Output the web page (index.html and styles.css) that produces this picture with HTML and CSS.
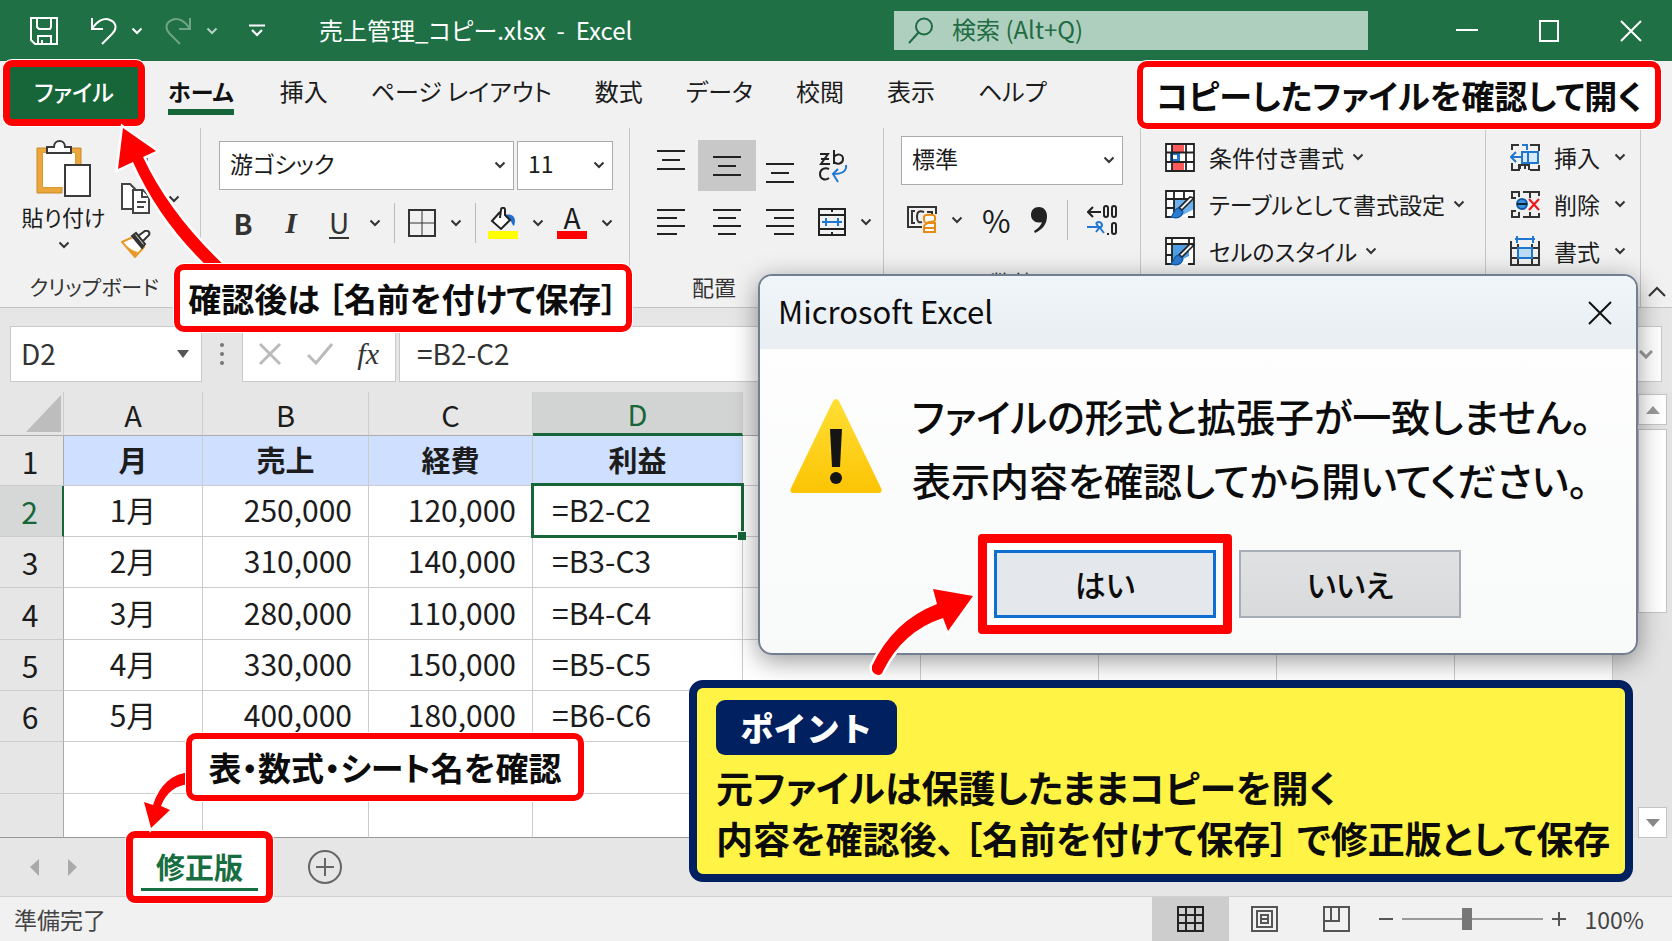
FILE: index.html
```html
<!DOCTYPE html>
<html lang="ja">
<head>
<meta charset="utf-8">
<title>売上管理_コピー.xlsx - Excel</title>
<link rel="stylesheet" href="styles.css">
</head>
<body>
<svg class="defs" aria-hidden="true">
  <symbol id="chev" viewBox="0 0 12 8"><path d="M1.5 1.5 6 6l4.500-4.500" fill="none" stroke="currentColor" stroke-width="2"/></symbol>
  <symbol id="brush" viewBox="0 0 30 30"><path d="M29 9 17 21l-3-2L25 8z" fill="#eef3f8" stroke="#222" stroke-width="1.600"/><path d="M13 19l5 4c-1 5-6 7-12 5 3-2 2-7 7-9z" fill="#2b7cd3" stroke="#1259a5" stroke-width="1.200"/></symbol>
</svg>
<div class="app">
  <header class="titlebar">
    <div class="quick">
      <button class="ic save" aria-label="上書き保存"><svg width="28" height="28" viewBox="0 0 28 28" fill="none" stroke="#fff" stroke-width="2"><path d="M1 1h26v26H5l-4-4zM7 1v9l2 2h11l1-2V1M8 27v-8h13v8M12 27v-4"/></svg></button>
      <button class="ic undo" aria-label="元に戻す"><svg width="28" height="28" viewBox="0 0 28 28" fill="none" stroke="#fff" stroke-width="2"><path d="M2 1v11h11M2 12C7 4 14 0 20 3c7 3 7 9 2 14L12 27"/></svg></button>
      <button class="ic" aria-label="元に戻すの一覧"><svg class="chev white" ><use href="#chev"/></svg></button>
      <button class="ic redo" aria-label="やり直し"><svg width="28" height="28" viewBox="0 0 28 28" fill="none" stroke="#6fa487" stroke-width="2"><path d="M26 1v11H15M26 12C21 4 14 0 8 3c-7 3-7 9-2 14l10 10"/></svg></button>
      <button class="ic" aria-label="やり直しの一覧"><svg class="chev pale"><use href="#chev"/></svg></button>
      <button class="ic custom" aria-label="クイック アクセス ツール バーのカスタマイズ"><svg width="16" height="14" viewBox="0 0 16 14" fill="none" stroke="#fff" stroke-width="2.200"><path d="M0 1.500h16M3 6l5 5 5-5"/></svg></button>
    </div>
    <h1 class="title">売上管理_コピー.xlsx&nbsp; -&nbsp; Excel</h1>
    <label class="search">
      <svg width="26" height="28" viewBox="0 0 26 28" fill="none" stroke="#1c6b42" stroke-width="2"><circle cx="16" cy="9.500" r="8"/><path d="M10.500 15.500 1 26"/></svg>
      <input type="text" placeholder="検索 (Alt+Q)" aria-label="検索">
    </label>
    <div class="winbtns">
      <button class="ic" aria-label="最小化"><svg width="22" height="22" stroke="#fff" stroke-width="2"><path d="M0 10h22"/></svg></button>
      <button class="ic" aria-label="最大化"><svg width="22" height="22" fill="none" stroke="#fff" stroke-width="2"><path d="M2 1h18v20H2z"/></svg></button>
      <button class="ic" aria-label="閉じる"><svg width="22" height="22" stroke="#fff" stroke-width="2"><path d="M1 1l20 20M21 1 1 21"/></svg></button>
    </div>
  </header>

  <nav class="tabs">
    <button class="tab file">ファイル</button>
    <button class="tab home">ホーム</button>
    <button class="tab">挿入</button>
    <button class="tab">ページ レイアウト</button>
    <button class="tab">数式</button>
    <button class="tab">データ</button>
    <button class="tab">校閲</button>
    <button class="tab">表示</button>
    <button class="tab">ヘルプ</button>
  </nav>

  <section class="ribbon">
    <div class="group clip">
      <div class="cliprow">
        <button class="paste">
          <svg width="56" height="58" viewBox="0 0 56 58"><path d="M1 8h44v17h-6V13H7v34h19v6H1z" fill="#eba63c" stroke="#c98a2b"/><path d="M7 13h32v12H29v22H7z" fill="#fff"/><path d="M11 13V7h7c0-8 11-8 11 0h6v6z" fill="#fff" stroke="#3a3a3a" stroke-width="2"/><path d="M29 25h25v31H29z" fill="#fff" stroke="#3a3a3a" stroke-width="2"/></svg>
          <span>貼り付け</span>
          <svg class="chev"><use href="#chev"/></svg>
        </button>
        <div class="clipside">
          <button class="ic" aria-label="切り取り"><svg width="30" height="28" viewBox="0 0 30 28" fill="none" stroke="#2b6cb8" stroke-width="2"><path d="M24 1 14 17" stroke="#333"/><circle cx="22" cy="20" r="4"/></svg></button>
          <span class="copy"><button class="ic" aria-label="コピー"><svg width="30" height="32" viewBox="0 0 30 32" fill="#fff" stroke="#444" stroke-width="2"><path d="M1 26V1h8l5 5v20z"/><path d="M12 30V7h10l6 6v17z"/><path d="M21 8v6h6M16 19h9M16 24h7" fill="none"/></svg></button><svg class="chev"><use href="#chev"/></svg></span>
          <button class="ic" aria-label="書式のコピー"><svg width="30" height="28" viewBox="0 0 30 28"><path d="M12 7 1 12l13 15 9-10z" fill="#fff" stroke="#e59a2b" stroke-width="2"/><path d="M3 14l11 12 3-4c-5-1-9-4-14-8z" fill="#e59a2b"/><path d="M11 6l4-3 9 11-3 4zM17 6l7-5c4-1 5 2 4 4l-6 6M13 5l9 11" fill="#fff" stroke="#333" stroke-width="2"/></svg></button>
        </div>
      </div>
      <p class="glabel">クリップボード</p>
    </div>

    <div class="group font">
      <div class="selects">
        <span class="sel wide"><select aria-label="フォント"><option>游ゴシック</option></select><svg class="chev"><use href="#chev"/></svg></span>
        <span class="sel size"><select aria-label="フォント サイズ"><option>11</option></select><svg class="chev"><use href="#chev"/></svg></span>
      </div>
      <div class="fontrow">
        <span class="biu">
          <button class="ic glyph b">B</button>
          <button class="ic glyph i">I</button>
          <button class="ic glyph u"><span>U</span></button>
          <svg class="chev"><use href="#chev"/></svg>
        </span>
        <i class="vsep"></i>
        <span class="pair"><button class="ic" aria-label="罫線"><svg width="28" height="28" fill="none" stroke="#333" stroke-width="2"><path d="M1 1h26v26H1z"/><path d="M14 1v26M1 14h26" stroke-width="1"/></svg></button><svg class="chev"><use href="#chev"/></svg></span>
        <i class="vsep"></i>
        <span class="pair"><button class="ic" aria-label="塗りつぶしの色"><svg width="30" height="32" viewBox="0 0 30 32"><path d="M0 24h30v8H0z" fill="#ff0"/><path d="M17 8c8-2 12 3 9 11-2-1-2-4-4-6z" fill="#1f6fd0"/><path d="M12 5 4 14l9 8 9-9-5-5V3c0-3-4-3-4 0l-1 8" fill="#fff" stroke="#222" stroke-width="2"/></svg></button><svg class="chev"><use href="#chev"/></svg></span>
        <span class="pair"><button class="ic fcolor" aria-label="フォントの色">A</button><svg class="chev"><use href="#chev"/></svg></span>
      </div>
    </div>

    <div class="group align">
      <div class="aligngrid">
        <button class="ic up" aria-label="上揃え"><svg width="28" height="20" stroke="#222" stroke-width="2"><path d="M0 1h28M5 10h18M0 19h28"/></svg></button>
        <button class="ic on" aria-label="上下中央揃え"><svg width="28" height="20" stroke="#222" stroke-width="2"><path d="M0 1h28M5 10h18M0 19h28"/></svg></button>
        <button class="ic down" aria-label="下揃え"><svg width="28" height="20" stroke="#222" stroke-width="2"><path d="M0 1h28M5 10h18M0 19h28"/></svg></button>
        <button class="ic" aria-label="折り返して全体を表示する"><svg width="30" height="34" viewBox="0 0 30 34" fill="none" stroke="#222" stroke-width="2"><path d="M2 5h8L3 15h9M3 10h8M16 1v14M16 8c3-4 9-3 9 2s-6 6-9 3M11 20c-4-2-9 0-9 5s5 7 9 4"/><path d="M28 16c1 6-4 9-12 9M20 20l-5 5 5 8" stroke="#1f77d0"/></svg></button>
        <button class="ic" aria-label="左揃え"><svg width="28" height="26" stroke="#222" stroke-width="2"><path d="M0 1h28M0 9h20M0 17h28M0 25h20"/></svg></button>
        <button class="ic" aria-label="中央揃え"><svg width="28" height="26" stroke="#222" stroke-width="2"><path d="M0 1h28M5 9h18M0 17h28M5 25h18"/></svg></button>
        <button class="ic" aria-label="右揃え"><svg width="28" height="26" stroke="#222" stroke-width="2"><path d="M0 1h28M8 9h20M0 17h28M8 25h20"/></svg></button>
        <span class="pair"><button class="ic" aria-label="セルを結合して中央揃え"><svg width="28" height="28" fill="none" stroke="#222" stroke-width="2"><path d="M1 1h26v26H1zM1 7h26M1 21h26M14 1v3M14 24v3"/><path d="M4 14h20M8 10v8M20 10v8" stroke="#1f77d0"/></svg></button><svg class="chev"><use href="#chev"/></svg></span>
      </div>
      <p class="glabel">配置</p>
    </div>

    <div class="group num">
      <span class="sel"><select aria-label="表示形式"><option>標準</option></select><svg class="chev"><use href="#chev"/></svg></span>
      <div class="numrow">
        <span class="pair"><button class="ic" aria-label="通貨表示形式"><svg width="30" height="28" viewBox="0 0 30 28" fill="none" stroke="#333" stroke-width="2"><path d="M15 21H1V1h28v7"/><path d="M8 5H5v12h3M17 6c-5-2-7 0-7 5s2 6 5 5M20 6h5v3"/><path d="M17 11c0-3 11-3 11 0v3c0 2-8 2-8 3h8v9H17v-5c0-3 3-3 3-4-3 0-3-2-3-6z" fill="#fff" stroke="#e98a15"/><path d="M18 22h9" stroke="#e98a15"/></svg></button><svg class="chev"><use href="#chev"/></svg></span>
        <button class="ic pct">%</button>
        <button class="ic" aria-label="桁区切り"><svg width="18" height="28" viewBox="0 0 18 28"><path d="M9 1c5 0 8 4 8 9 0 8-4 13-12 17l-1-2c5-3 7-6 8-9-6 2-11-2-11-7 0-5 3-8 8-8z" fill="#222"/></svg></button>
        <i class="vsep"></i>
        <button class="ic" aria-label="小数点以下の表示桁数"><svg width="30" height="32" viewBox="0 0 30 32" fill="none" stroke="#222" stroke-width="2"><path d="M1 8h13M6 3 1 8l5 5"/><rect x="17" y="2" width="4" height="11" rx="2"/><rect x="25" y="2" width="4" height="11" rx="2"/><rect x="25" y="19" width="4" height="11" rx="2"/><path d="M21 29v2"/><path d="M0 23h13M9 19c5-3 8 2 4 5l4 5M9 19l3 5-3 4" stroke="#1f77d0"/></svg></button>
      </div>
      <p class="glabel">数値</p>
    </div>

    <div class="group list styles">
      <button class="item"><svg width="30" height="29" viewBox="0 0 30 29"><path d="M1 1h28v27H1z" fill="#fff"/><path d="M7 2h12v7H7zM7 20h12v7H7z" fill="#ff5a5a"/><path d="M5 10h10v8H5z" fill="#1f77d0"/><path d="M8 12h4v4H8z" fill="#fff"/><path d="M1 1h28v27H1zM1 9.500h28M1 19h28M7 1v27M21 1v27" fill="none" stroke="#222" stroke-width="1.800"/></svg><span>条件付き書式</span><svg class="chev"><use href="#chev"/></svg></button>
      <button class="item"><svg width="30" height="30" viewBox="0 0 30 30"><path d="M1 2h28v26H1z" fill="#fff"/><path d="M9 10h20v10L14 28 9 22z" fill="#6cb2ee"/><path d="M14 28H1V2h28v26h-6M1 10h28M1 19h8M9 2v26M19 2v8" fill="none" stroke="#222" stroke-width="1.800"/><use href="#brush"/></svg><span>テーブルとして書式設定</span><svg class="chev"><use href="#chev"/></svg></button>
      <button class="item"><svg width="30" height="30" viewBox="0 0 30 30"><path d="M1 2h28v26H1z" fill="#fff"/><path d="M7 8h17v12L12 26 7 22z" fill="#4f9fe4"/><path d="M14 28H1V2h28v26h-6M1 8h28M7 2v26M1 19h6M24 2v6" fill="none" stroke="#222" stroke-width="1.800"/><use href="#brush"/></svg><span>セルのスタイル</span><svg class="chev"><use href="#chev"/></svg></button>
    </div>

    <div class="group list cells">
      <button class="item"><svg width="30" height="29" viewBox="0 0 30 29" fill="none" stroke="#333" stroke-width="2"><path d="M2 7V2h7M20 2h9v6M2 20v7h7V21M20 27h9v-5M10 26v-4h9v5M15 22v4"/><path d="M12 9h16v11H12zM18 9v11" fill="#d6eafb" stroke="#1f77d0"/><path d="M12 14H2M6 9l-5 5 5 5M12 2h5v5" stroke="#1f77d0"/></svg><span>挿入</span><svg class="chev"><use href="#chev"/></svg></button>
      <button class="item"><svg width="30" height="29" viewBox="0 0 30 29" fill="none" stroke="#333" stroke-width="2"><path d="M6 8H2V2h7v5M13 2h16v4M20 2v6M6 21H2v6h7v-5M13 27h16v-4M20 27v-5"/><circle cx="12" cy="14" r="5" fill="#3f94e0" stroke="#1259a5"/><path d="M7 14h10" stroke="#123"/><path d="M19 9l10 11M29 9 19 20" stroke="#f01414"/></svg><span>削除</span><svg class="chev"><use href="#chev"/></svg></button>
      <button class="item"><svg width="30" height="30" viewBox="0 0 30 30" fill="none" stroke="#333" stroke-width="2"><path d="M1 5v24h28V5M1 12h28M1 22h28M8 8v21M22 8v21"/><path d="M8 12h14v10H8z" fill="#bcdcf7" stroke="#1f77d0"/><path d="M5 3h20M7 0v7M23 0v7" stroke="#1f77d0"/></svg><span>書式</span><svg class="chev"><use href="#chev"/></svg></button>
    </div>
    <div class="group tail">
      <button class="ic" aria-label="リボンを折りたたむ"><svg width="18" height="11" fill="none" stroke="#333" stroke-width="2"><path d="M1 10l8-8 8 8"/></svg></button>
    </div>
  </section>

  <section class="fbar">
    <label class="namebox"><input type="text" value="D2" aria-label="名前ボックス"><svg width="12" height="8"><path d="M0 0h12L6 8z" fill="#555"/></svg></label>
    <svg class="dots" width="4" height="22" fill="#777"><circle cx="2" cy="2" r="2"/><circle cx="2" cy="11" r="2"/><circle cx="2" cy="20" r="2"/></svg>
    <div class="fx">
      <button class="ic" aria-label="キャンセル"><svg width="24" height="24" stroke="#bbb" stroke-width="3"><path d="M2 2l20 20M22 2 2 22"/></svg></button>
      <button class="ic" aria-label="入力"><svg width="26" height="22" fill="none" stroke="#bbb" stroke-width="3"><path d="M1 12l8 8L25 1"/></svg></button>
      <button class="ic fxb">fx</button>
    </div>
    <label class="formula"><input type="text" value="=B2-C2" aria-label="数式バー"><svg width="14" height="9" fill="none" stroke="#999" stroke-width="3"><path d="M1 1l6 6 6-6"/></svg></label>
  </section>

  <main class="sheet">
    <table>
      <colgroup><col class="c0"><col class="c1"><col class="c2"><col class="c3"><col class="c4"><col class="cx"><col class="cx"><col class="cx"><col class="cx"><col></colgroup>
      <thead><tr><th class="corner"><svg width="35" height="37"><path d="M35 0v37H0z" fill="#bdbdbd"/></svg></th><th>A</th><th>B</th><th>C</th><th class="cur">D</th><th></th><th></th><th></th><th></th><th></th></tr></thead>
      <tbody>
        <tr class="head"><th>1</th><td>月</td><td>売上</td><td>経費</td><td>利益</td><td></td><td></td><td></td><td></td><td></td></tr>
        <tr class="active"><th>2</th><td>1月</td><td>250,000</td><td>120,000</td><td class="picked">=B2-C2</td><td></td><td></td><td></td><td></td><td></td></tr>
        <tr><th>3</th><td>2月</td><td>310,000</td><td>140,000</td><td>=B3-C3</td><td></td><td></td><td></td><td></td><td></td></tr>
        <tr class="tall"><th>4</th><td>3月</td><td>280,000</td><td>110,000</td><td>=B4-C4</td><td></td><td></td><td></td><td></td><td></td></tr>
        <tr><th>5</th><td>4月</td><td>330,000</td><td>150,000</td><td>=B5-C5</td><td></td><td></td><td></td><td></td><td></td></tr>
        <tr><th>6</th><td>5月</td><td>400,000</td><td>180,000</td><td>=B6-C6</td><td></td><td></td><td></td><td></td><td></td></tr>
        <tr class="tall"><th></th><td></td><td></td><td></td><td></td><td></td><td></td><td></td><td></td><td></td></tr>
        <tr class="last"><th></th><td></td><td></td><td></td><td></td><td></td><td></td><td></td><td></td><td></td></tr>
      </tbody>
    </table>
    <div class="vscroll">
      <button class="sb" aria-label="上へ"><svg width="14" height="8"><path d="M0 8h14L7 0z" fill="#999"/></svg></button>
      <div class="thumb"></div>
      <button class="sb end" aria-label="下へ"><svg width="14" height="8"><path d="M0 0h14L7 8z" fill="#888"/></svg></button>
    </div>
  </main>

  <div class="sheettabs">
    <div class="nav">
      <button class="ic" aria-label="前のシート"><svg width="9" height="17"><path d="M9 0v17L0 8z" fill="#aaa"/></svg></button>
      <button class="ic" aria-label="次のシート"><svg width="9" height="17"><path d="M0 0v17l9-9z" fill="#aaa"/></svg></button>
    </div>
    <button class="stab"><span>修正版</span></button>
    <button class="ic add" aria-label="新しいシート"><svg width="36" height="36" fill="none" stroke="#666" stroke-width="2"><circle cx="18" cy="18" r="16"/><path d="M9 18h18M18 9v18"/></svg></button>
  </div>

  <footer class="status">
    <span class="ready">準備完了</span>
    <div class="views">
      <button class="ic view on" aria-label="標準"><svg width="27" height="26" fill="none" stroke="#222" stroke-width="2"><path d="M1 1h25v24H1zM9 1v24M18 1v24M1 9h25M1 17h25"/></svg></button>
      <button class="ic view" aria-label="ページ レイアウト"><svg width="27" height="26" fill="none" stroke="#555" stroke-width="2"><path d="M1 1h25v24H1zM6 5h15v16H6zM10 9h7v8h-7zM11 13h5"/></svg></button>
      <button class="ic view" aria-label="改ページ プレビュー"><svg width="27" height="26" fill="none" stroke="#555" stroke-width="2"><path d="M1 1h25v24H1zM1 15h15V1M8 1v14"/></svg></button>
    </div>
    <div class="zoom">
      <button class="ic" aria-label="縮小"><svg width="14" height="14" stroke="#555" stroke-width="2"><path d="M0 7h14"/></svg></button>
      <input type="range" min="0" max="100" value="46" aria-label="ズーム">
      <button class="ic" aria-label="拡大"><svg width="14" height="14" stroke="#555" stroke-width="2"><path d="M0 7h14M7 0v14"/></svg></button>
      <span>100%</span>
    </div>
  </footer>

  <div class="dialog" role="dialog" aria-labelledby="dt">
    <div class="dhead"><h2 id="dt">Microsoft Excel</h2><button class="ic" aria-label="閉じる"><svg width="24" height="24" stroke="#111" stroke-width="2"><path d="M1 1l22 22M23 1 1 23"/></svg></button></div>
    <div class="dbody">
      <svg class="warn" width="94" height="96" viewBox="0 0 94 96"><defs><linearGradient id="wg" x2="0" y2="1"><stop offset="0" stop-color="#ffdf35"/><stop offset="1" stop-color="#fcc404"/></linearGradient></defs><path d="M44 3q3-4 6 0l42 87q2 5-3 5H5q-5 0-3-5z" fill="url(#wg)"/><path d="M41 31h12l-2 38h-8z" fill="#151515"/><circle cx="47" cy="80" r="6" fill="#151515"/></svg>
      <div class="msg"><p>ファイルの形式と拡張子が一致しません。</p><p>表示内容を確認してから開いてください。</p></div>
    </div>
    <div class="dbtns"><span class="ring"><button class="btn yes">はい</button></span><button class="btn">いいえ</button></div>
  </div>

  <aside class="point">
    <strong class="badge">ポイント</strong>
    <p>元ファイルは保護したままコピーを開く</p>
    <p>内容を確認後、 ［名前を付けて保存］ で修正版として保存</p>
  </aside>

  <svg class="arrow a1" width="120" height="150" viewBox="0 0 120 150"><path d="M13 8 46 31 33 37Q60 95 117 148H99Q50 102 23 42L8 49z"/></svg>
  <svg class="arrow a2" width="112" height="96" viewBox="0 0 112 96"><path d="M108 15 68 8 72 23Q28 40 7 85 6 93 13 94 17 94 18 90 38 50 78 37L83 50z"/></svg>
  <svg class="arrow a3" width="60" height="66" viewBox="0 0 60 66"><path d="M14 61 7 35 16 38Q26 7 54 5V17Q32 18 24 39L33 43z"/></svg>
  <div class="callout k1">コピーしたファイルを確認して開く</div>
  <div class="callout k2">確認後は ［名前を付けて保存］</div>
  <div class="callout k3">表・数式・シート名を確認</div>
</div>
</body>
</html>
```
FILE: styles.css
```css
* { box-sizing: border-box; font-feature-settings: "palt"; }
body {
  margin: 0;
  font-family: "Noto Sans CJK JP", "Noto Sans", sans-serif;
  font-size: 22px;
  line-height: 32px;
  color: #1c1c1c;
  background: #f1f1f1;
}
h1, h2, p { margin: 0; }
h1, h2 { font-weight: 400; }
button, input, select { font: inherit; color: inherit; }
button { background: none; border: 0; padding: 0; }
svg { display: block; flex: none; }
.defs { position: absolute; width: 0; height: 0; }
.chev { width: 12px; height: 8px; color: #333; }
.chev.white { color: #fff; }
.chev.pale { color: #b5d2c3; }
.ic { display: flex; align-items: center; justify-content: center; flex: none; }
.app { position: relative; display: flex; flex-direction: column; min-height: 100vh; overflow: hidden; }

/* Title bar */
.titlebar { display: flex; align-items: center; height: 61px; background: #1f7145; color: #fff; }
.quick { display: flex; align-items: center; width: 319px; padding-left: 30px; }
.undo { margin: 0 13px 0 32px; }
.redo { margin: 0 14px 0 21px; }
.custom { margin-left: 31px; }
.title { flex: 1; padding-bottom: 2px; font-size: 24px; white-space: nowrap; }
.search { display: flex; align-items: center; gap: 18px; width: 474px; height: 39px; margin-right: 88px; padding-left: 14px; background: #aecfbe; }
.search input { flex: 1; min-width: 0; padding: 0 0 3px; border: 0; background: none; font-size: 24px; }
.search input::placeholder { color: #1f6b43; opacity: 1; }
.winbtns { display: flex; gap: 60px; padding-right: 30px; }

/* Ribbon tabs */
.tabs { display: flex; align-items: center; height: 67px; padding: 2px 0 6px 3px; font-size: 24px; gap: 43px; }
.tab { white-space: nowrap; padding-bottom: 3px; }
.file { width: 142px; height: 66px; margin-right: -20px; border: 7px solid #fe0000; border-radius: 9px; background: #176639; color: #fff; font-weight: 500; box-shadow: 0 0 0 1px #fff; font-size: 23px; z-index: 1; }
.home { margin-right: 3px; padding: 4px 0 2px; border-bottom: 6px solid #176639; color: #111; font-size: 23px; font-weight: 700; }

/* Ribbon groups */
.ribbon { display: grid; grid-template-columns: 201fr 429fr 254fr 257fr 345fr 155fr 31px; height: 180px; border-bottom: 1px solid #c4c4c4; }
.group { position: relative; display: flex; flex-direction: column; min-width: 0; border-right: 1px solid #c6c6c6; }
.tail { border: 0; align-items: center; justify-content: flex-end; padding-bottom: 10px; }
.glabel { margin-top: auto; text-align: center; font-size: 22px; color: #333; white-space: nowrap; }
.clip, .align { padding-bottom: 5px; }
.clip .glabel { font-size: 21px; padding-right: 12px; }
.cliprow { display: flex; height: 130px; padding: 12px 0 0 20px; gap: 14px; }
.paste { display: flex; flex-direction: column; align-items: center; width: 87px; font-size: 22px; white-space: nowrap; }
.paste span { padding: 2px 0 9px; }
.clipside { display: flex; flex-direction: column; gap: 15px; }
.clipside > * { align-self: flex-start; }
.copy { display: flex; align-items: center; gap: 17px; }

.sel { position: relative; display: flex; }
.sel select { appearance: none; width: 100%; height: 49px; padding: 0 10px 5px; border: 1px solid #ababab; border-radius: 0; background: #fff; font-size: 23px; }
.sel .chev { position: absolute; right: 8px; top: 20px; pointer-events: none; }
.font { padding: 13px 16px 0 18px; }
.selects { display: flex; gap: 3px; }
.wide { flex: 1; }
.size { width: 96px; }
.pair { display: flex; align-items: center; gap: 14px; }
.fontrow { display: flex; align-items: center; gap: 13px; height: 66px; }
.biu { display: flex; align-items: center; }
.biu .chev { margin-left: 6px; }
.glyph { width: 48px; font-size: 28px; color: #333; }
.b { font-weight: 700; }
.i { font-family: "Liberation Serif", serif; font-style: italic; font-weight: 700; font-size: 30px; }
.u span { border-bottom: 2px solid #333; line-height: 30px; }
.vsep { width: 1px; height: 40px; background: #bbb; }
.fcolor { width: 30px; height: 32px; padding-bottom: 4px; border-bottom: 8px solid #f00; font-size: 28px; line-height: 20px; }

.aligngrid { display: grid; grid-template-columns: 54px 58px 48px 72px; grid-template-rows: 51px 61px; align-items: center; padding: 12px 0 0 14px; }
.aligngrid .ic { justify-self: center; }
.aligngrid .on { width: 58px; height: 51px; background: #c8c8c8; }
.up { padding-bottom: 12px; }
.down { padding-top: 14px; }
.aligngrid > :nth-child(4n) { justify-self: start; margin-left: 14px; }
.align .glabel { padding-left: 62px; text-align: left; }

.num { padding: 8px 17px 10px; }
.numrow { display: flex; align-items: center; justify-content: space-between; height: 70px; padding: 0 6px; }
.pct { font-size: 31px; }

.list { padding: 8px 0 35px 24px; justify-content: space-between; }
.item { display: flex; align-items: center; gap: 14px; height: 42px; font-size: 23px; white-space: nowrap; }
.item .chev { margin-left: -6px; }
.cells .item .chev { margin-left: 0; }

/* Formula bar */
.fbar { display: flex; align-items: center; height: 84px; padding: 8px 10px 0; background: #e6e6e6; }
.namebox, .fx, .formula { display: flex; align-items: center; height: 56px; border: 1px solid #c9c9c9; background: #fff; }
.namebox { width: 192px; padding: 0 12px 0 10px; }
.fbar input { flex: 1; min-width: 0; padding: 0 0 3px; border: 0; background: none; color: #333; font-size: 28px; font-feature-settings: normal; font-kerning: none; }
.dots { margin: 0 18px; }
.fx { width: 154px; margin-right: 3px; justify-content: space-between; padding: 0 16px 0 15px; }
.fxb { font: italic 30px/32px "Liberation Serif", serif; color: #333; }
.formula { flex: 1; padding: 0 8px 0 17px; }

/* Sheet */
.sheet { display: flex; flex: 1; background: #e3e3e3; }
table { flex: 1; border-collapse: separate; border-spacing: 0; table-layout: fixed; font-size: 30px; font-kerning: none; background: #fff; }
th, td { font-feature-settings: normal; }
.c0 { width: 64px; } .c1 { width: 139px; } .c2 { width: 166px; } .c3 { width: 164px; } .c4 { width: 210px; } .cx { width: 178px; }
th, td { padding: 0; border-right: 1px solid #ccc; border-bottom: 1px solid #ccc; font-weight: 400; }
thead th { height: 44px; background: #e6e6e6; border-bottom-color: #ababab; font-size: 29px; line-height: 36px; }
tbody th { background: #e6e6e6; padding-right: 3px; border-right-color: #aaa; }
tr { height: 51px; }
thead tr { height: 44px; }
.head { height: 50px; }
.tall { height: 52px; }
.last { height: 44px; }
.last > * { border-bottom-color: #999; }
.corner svg { margin: 0 2px 0 auto; }
th.cur { background: #d2d4d3; color: #176639; border-bottom: 3px solid #176639; }
td { padding-bottom: 4px; }
td:nth-child(2) { text-align: center; }
td:nth-child(3), td:nth-child(4) { text-align: right; padding-right: 16px; }
td:nth-child(5) { padding-left: 19px; }
.head td { padding: 0 0 3px; text-align: center; font-weight: 700; font-size: 29px; }
.head td:nth-child(-n+5) { background: #cfdfff; }
.active th { background: #d6d8d7; color: #176639; border-right: 2px solid #176639; }
.picked { position: relative; }
.picked::before { content: ""; position: absolute; inset: -3px -2px -2px -2px; border: 3px solid #176639; }
.picked::after { content: ""; position: absolute; right: -4px; bottom: -4px; width: 8px; height: 8px; background: #176639; border: 1px solid #fff; border-width: 1px 0 0 1px; }
.vscroll { display: flex; flex-direction: column; width: 59px; padding: 2px 5px 0 25px; gap: 4px; background: #e3e3e3; }
.sb { display: flex; align-items: center; justify-content: center; height: 31px; border: 1px solid #c4c4c4; background: #fff; }
.thumb { height: 184px; border: 1px solid #c4c4c4; background: #fff; }
.end { margin-top: auto; }

/* Sheet tabs */
.sheettabs { display: flex; align-items: center; height: 58px; background: #e6e6e6; }
.nav { display: flex; gap: 29px; width: 126px; padding-left: 30px; }
.stab { display: flex; align-items: center; justify-content: center; width: 147px; height: 72px; margin-right: 34px; border: 7px solid #fe0000; border-radius: 9px; background: #fff; color: #176e40; font-size: 29px; font-weight: 700; box-shadow: 0 0 0 1px #fff; z-index: 1; }
.stab span { padding: 5px 15px; border-bottom: 3px solid #176e40; line-height: 34px; }

/* Status bar */
.status { display: flex; align-items: center; height: 45px; padding: 0 28px 0 14px; border-top: 1px solid #d0d0d0; color: #444; }
.ready { flex: 1; font-size: 23px; }
.views { display: flex; height: 44px; }
.view { width: 72px; }
.view.on { width: 77px; background: #cdcdcd; }
.zoom { display: flex; align-items: center; gap: 9px; padding-left: 6px; }
.zoom input { appearance: none; width: 141px; height: 22px; margin: 0; background: linear-gradient(#999, #999) center / 100% 2px no-repeat; }
.zoom input::-webkit-slider-thumb { appearance: none; width: 10px; height: 22px; background: #777; }
.zoom span { padding-left: 10px; font-size: 23px; }

/* Dialog */
.dialog { position: absolute; left: 758px; right: 34px; top: 274px; height: 381px; border: 2px solid #737f90; border-radius: 14px; background: linear-gradient(#fff, #f8f9f9); box-shadow: 0 6px 26px rgba(0, 0, 0, .4); overflow: hidden; color: #0c0c0c; }
.dhead { display: flex; align-items: center; justify-content: space-between; height: 73px; padding: 0 24px 0 18px; background: linear-gradient(#f0f5fa, #e9eef3); }
.dhead h2 { padding-bottom: 3px; font-size: 31px; }
.dbody { display: flex; gap: 29px; padding: 34px 0 0 29px; }
.warn { margin-top: 15px; }
.msg { font-size: 39px; line-height: 64px; font-weight: 500; white-space: nowrap; }
.dbtns { display: flex; align-items: center; gap: 7px; padding: 23px 0 0 218px; }
.ring { padding: 7px; border: 9px solid #fe0000; border-radius: 4px; background: #fff; }
.btn { display: block; width: 222px; height: 68px; border: 2px solid #a7adb4; background: linear-gradient(#e0e1e2, #d9dadb); font-size: 31px; font-weight: 500; }
.yes { border: 3px solid #0e6fd0; background: #e4e7eb; }

/* Callouts */
.point { position: absolute; left: 689px; right: 39px; top: 680px; padding: 12px 0 10px 19px; border: 8px solid #002060; border-radius: 14px; background: #fff445; font-size: 37px; line-height: 51px; font-weight: 700; color: #0c0c0c; }
.point p { white-space: nowrap; }
.badge { display: block; width: 181px; height: 55px; margin-bottom: 7px; border-radius: 9px; background: #002060; color: #fff; font-size: 33px; line-height: 54px; text-align: center; font-feature-settings: normal; }
.callout { position: absolute; height: 68px; border: 6px solid #fe0000; border-radius: 10px; background: #fff; color: #0c0c0c; font-size: 33px; font-weight: 700; line-height: 56px; text-align: center; white-space: nowrap; box-shadow: 0 0 0 1px #fff; z-index: 2; }
.k1 { right: 11px; top: 61px; width: 524px; }
.k2 { left: 174px; top: 264px; width: 458px; }
.k3 { left: 186px; top: 733px; width: 398px; }
.arrow { position: absolute; z-index: 2; fill: #fe0000; stroke: #fff; stroke-width: 5px; paint-order: stroke; }
.a1 { left: 110px; top: 120px; }
.a2 { left: 865px; top: 581px; }
.a3 { left: 137px; top: 767px; }
```
